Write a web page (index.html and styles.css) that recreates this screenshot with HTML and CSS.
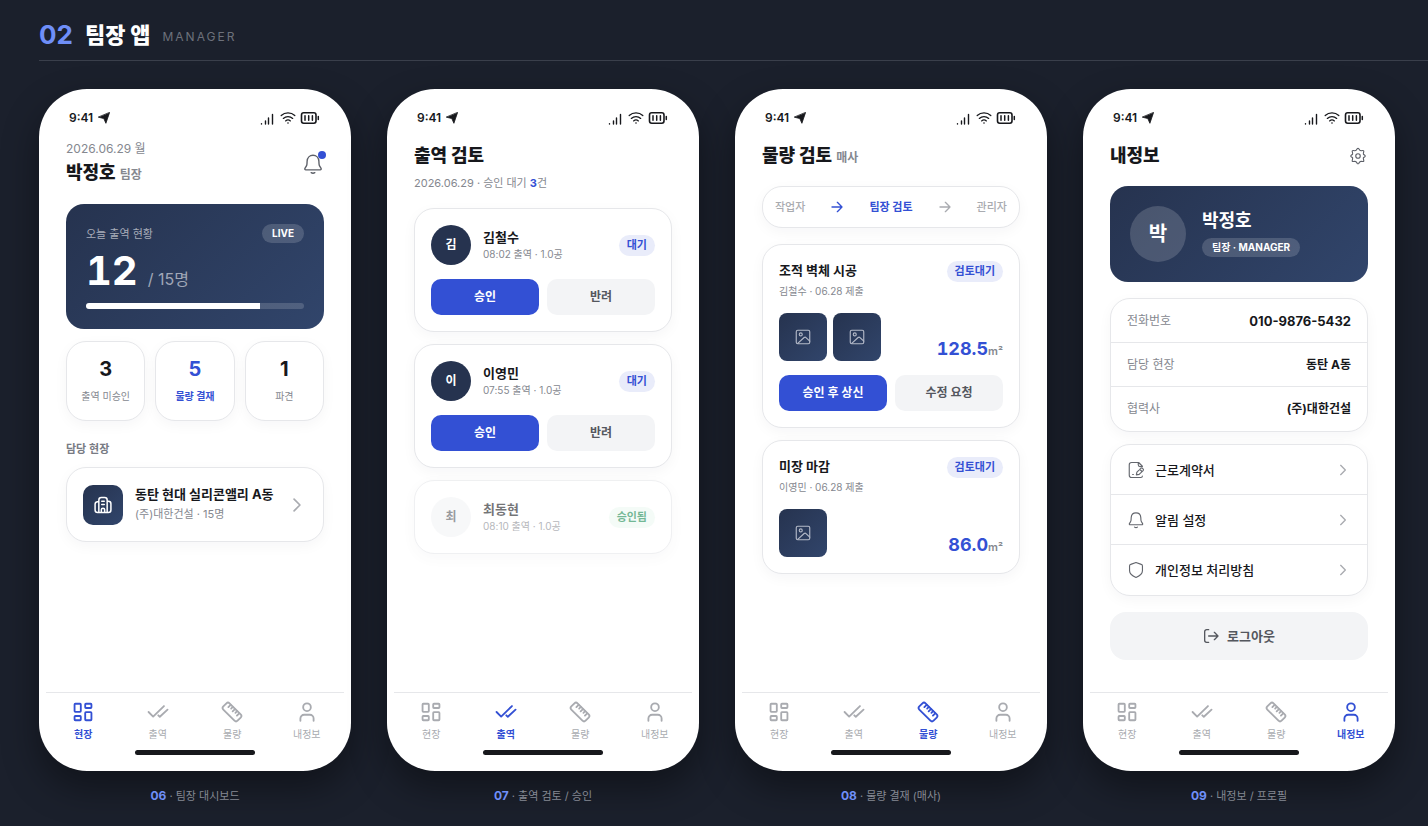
FILE: index.html
```html
<!DOCTYPE html>
<html lang="ko">
<head>
  <meta charset="UTF-8">
  <meta name="viewport" content="width=device-width, initial-scale=1">
  <title>팀장 앱</title>
  <link rel="stylesheet" href="styles.css">
</head>
<body>

  <!-- icon set -->
  <svg class="sprite" aria-hidden="true">
    <symbol id="i-location" viewBox="0 0 12 12"><path d="M11.5.7 7.900 11.300 5.800 6.600.6 5.200z" fill="currentColor" stroke="currentColor" stroke-width=".8" stroke-linejoin="round"/></symbol>
    <symbol id="i-signal" viewBox="0 0 14 14"><path d="M1.500 12.700V13M5.500 10V13M8.500 7V13M12.500 3.500V13" stroke-width="1.400"/></symbol>
    <symbol id="i-wifi" viewBox="0 0 16 14"><path d="M1.200 4.600a10 10 0 0 1 13.600 0M3.300 7.400a7 7 0 0 1 9.400 0M5.600 9.900a3.800 3.800 0 0 1 4.800 0" stroke-width="1.300"/><circle cx="8" cy="12" r=".8" fill="currentColor" stroke="none"/></symbol>
    <symbol id="i-battery" viewBox="0 0 20 14"><rect x="1.500" y="1.800" width="14.500" height="10.400" rx="2.200" stroke-width="1.600"/><path d="M5 4.800v4.400M8.700 4.800v4.400M12.400 4.800v4.400M18.300 5.500v3" stroke-width="1.500"/></symbol>
    <symbol id="i-bell" viewBox="0 0 24 24"><path d="M12 2.500c-3.700 0-6.200 2.800-6.400 6.300l-.2 3.200c0 .8-.3 1.600-.7 2.300l-1.500 2.500c-.4.900 0 1.600 1 1.600h15.600c1 0 1.400-.7 1-1.600l-1.500-2.500c-.4-.7-.7-1.500-.7-2.300l-.2-3.200C18.200 5.300 15.700 2.500 12 2.500zM10 21.500c1.200.7 2.800.7 4 0"/></symbol>
    <symbol id="i-building" viewBox="0 0 24 24"><path d="M7 21V6a3 3 0 0 1 3-3h4a3 3 0 0 1 3 3v15M7 8H5.500a3 3 0 0 0-3 3v7a3 3 0 0 0 3 3h13a3 3 0 0 0 3-3v-7.500a3 3 0 0 0-3-3H17M10.500 7.500h3M10.500 11.500h3M10 21v-3a2 2 0 0 1 4 0v3" stroke-width="1.800"/></symbol>
    <symbol id="i-chevron" viewBox="0 0 24 24"><path d="m8.500 5 7 7-7 7" stroke-width="2"/></symbol>
    <symbol id="i-arrow" viewBox="0 0 24 24"><path d="M4.500 12h15M12.500 5l7 7-7 7"/></symbol>
    <symbol id="i-image" viewBox="0 0 24 24"><rect x="3" y="3" width="18" height="18" rx="2"/><circle cx="9" cy="8.500" r="2"/><path d="m5 20.500 8.500-7.800c.9-.8 1.700-.8 2.500 0L21 17.500"/></symbol>
    <symbol id="i-gear" viewBox="0 0 24 24"><path d="M9.600 4.200 11 2.300c.6-.7 1.400-.7 2 0l1.400 1.900c.4.5 1 .8 1.700.8l2.400-.3c.9-.1 1.400.5 1.200 1.300L19.200 8.300c-.2.700 0 1.300.4 1.800l1.500 1c.8.600.8 1.300 0 1.900l-1.500 1c-.5.500-.6 1.100-.4 1.800l.5 2.300c.2.900-.3 1.400-1.200 1.300l-2.400-.3c-.7 0-1.300.2-1.700.8L13 21.800c-.6.700-1.400.7-2 0l-1.400-1.900c-.4-.6-1-.8-1.700-.8l-2.400.3c-.9.100-1.400-.4-1.200-1.300l.5-2.300c.2-.7.100-1.300-.4-1.800l-1.500-1c-.8-.6-.8-1.300 0-1.900l1.500-1c.4-.5.600-1.100.4-1.800L4.300 6c-.2-.8.300-1.400 1.200-1.300l2.400.3c.7 0 1.300-.3 1.700-.8z"/><circle cx="12" cy="12" r="3"/></symbol>
    <symbol id="i-file" viewBox="0 0 24 24"><path d="M20.500 7.500V7L15.500 2H6a3 3 0 0 0-3 3v14a3 3 0 0 0 3 3h12.500c1.200 0 2-.8 2-2M15 2.500V5a2.500 2.500 0 0 0 2.500 2.500h3M7.500 18h1M12.500 18.500l.7-3.700 5.300-5c1.700-1.400 4.500 1.400 3 3l-5.300 5zM17 11l3 3"/></symbol>
    <symbol id="i-shield" viewBox="0 0 24 24"><path d="m12 2 7 2.500c1 .3 1.600 1 1.600 2V13c0 4-3.700 6.900-8.600 9-4.900-2.100-8.600-5-8.600-9V6.500c0-1 .6-1.700 1.600-2z"/></symbol>
    <symbol id="i-logout" viewBox="0 0 24 24"><path d="M8.500 2.500H5.500a3 3 0 0 0-3 3v13a3 3 0 0 0 3 3h3M8.500 12H22M17 6.500l5.500 5.500-5.500 5.500"/></symbol>
    <symbol id="i-grid" viewBox="0 0 24 24"><rect x="2.800" y="3" width="6.800" height="8.800" rx=".8"/><rect x="14.400" y="3" width="6.800" height="4.600" rx=".8"/><rect x="2.800" y="16.400" width="6.800" height="4.600" rx=".8"/><rect x="14.400" y="12.200" width="6.800" height="8.800" rx=".8"/></symbol>
    <symbol id="i-checks" viewBox="0 0 24 24"><path d="m1.700 12 5 5L18.500 5.500M12.300 15.600l1.700 1.600 8.400-7.800"/></symbol>
    <symbol id="i-ruler" viewBox="0 0 24 24"><g transform="translate(12 12) rotate(45)"><rect x="-11" y="-4.800" width="22" height="9.600" rx="2.400"/><path d="M-6.600-4.500v3.500M-3.300-4.500v2.500M0-4.500v3.500M3.300-4.500v2.500M6.600-4.500v3.500"/></g></symbol>
    <symbol id="i-user" viewBox="0 0 24 24"><circle cx="12" cy="6.800" r="4.200"/><path d="M4.800 21.500V19a4 4 0 0 1 4-4h6.400a4 4 0 0 1 4 4v2.500"/></symbol>
  </svg>

  <header class="section-header">
    <span class="section-no">02</span>
    <h1>팀장 앱</h1>
    <span class="section-en">MANAGER</span>
  </header>

  <main class="phones">

    <!-- 06 dashboard -->
    <figure class="frame">
      <div class="phone">
        <div class="status">
          <span class="time">9:41</span><svg class="icon location"><use href="#i-location"/></svg>
          <svg class="icon signal"><use href="#i-signal"/></svg><svg class="icon wifi"><use href="#i-wifi"/></svg><svg class="icon battery"><use href="#i-battery"/></svg>
        </div>
        <div class="content">
          <div class="greeting">
            <div>
              <p class="date">2026.06.29 월</p>
              <h2>박정호 <small>팀장</small></h2>
            </div>
            <button class="icon-btn" aria-label="알림"><svg class="icon"><use href="#i-bell"/></svg><span class="dot"></span></button>
          </div>

          <section class="hero">
            <div class="hero-top"><span>오늘 출역 현황</span><span class="tag">LIVE</span></div>
            <p class="hero-num"><strong>12</strong> <span>/ 15명</span></p>
            <div class="bar"><div class="bar-fill" style="width: 80%"></div></div>
          </section>

          <div class="stats">
            <div class="card stat"><strong>3</strong><span>출역 미승인</span></div>
            <div class="card stat active"><strong>5</strong><span>물량 결재</span></div>
            <div class="card stat"><strong>1</strong><span>파견</span></div>
          </div>

          <h3 class="label">담당 현장</h3>
          <a class="card site" href="#">
            <span class="site-icon"><svg class="icon"><use href="#i-building"/></svg></span>
            <span class="site-text"><strong>동탄 현대 실리콘앨리 A동</strong><span>(주)대한건설 · 15명</span></span>
            <svg class="icon chevron"><use href="#i-chevron"/></svg>
          </a>
        </div>
        <nav class="tabs">
          <a class="active" href="#"><svg class="icon"><use href="#i-grid"/></svg>현장</a>
          <a href="#"><svg class="icon"><use href="#i-checks"/></svg>출역</a>
          <a href="#"><svg class="icon"><use href="#i-ruler"/></svg>물량</a>
          <a href="#"><svg class="icon"><use href="#i-user"/></svg>내정보</a>
        </nav>
        <div class="home-bar"></div>
      </div>
      <figcaption><b>06</b> · 팀장 대시보드</figcaption>
    </figure>

    <!-- 07 attendance -->
    <figure class="frame">
      <div class="phone">
        <div class="status">
          <span class="time">9:41</span><svg class="icon location"><use href="#i-location"/></svg>
          <svg class="icon signal"><use href="#i-signal"/></svg><svg class="icon wifi"><use href="#i-wifi"/></svg><svg class="icon battery"><use href="#i-battery"/></svg>
        </div>
        <div class="content">
          <div class="title"><h2>출역 검토</h2></div>
          <p class="subtitle">2026.06.29 · 승인 대기 <b>3</b>건</p>

          <div class="list">
            <article class="card">
              <div class="person">
                <span class="avatar">김</span>
                <div class="person-text"><strong>김철수</strong><span>08:02 출역 · 1.0공</span></div>
                <span class="badge">대기</span>
              </div>
              <div class="actions"><button class="btn primary">승인</button><button class="btn">반려</button></div>
            </article>
            <article class="card">
              <div class="person">
                <span class="avatar">이</span>
                <div class="person-text"><strong>이영민</strong><span>07:55 출역 · 1.0공</span></div>
                <span class="badge">대기</span>
              </div>
              <div class="actions"><button class="btn primary">승인</button><button class="btn">반려</button></div>
            </article>
            <article class="card done">
              <div class="person">
                <span class="avatar">최</span>
                <div class="person-text"><strong>최동현</strong><span>08:10 출역 · 1.0공</span></div>
                <span class="badge green">승인됨</span>
              </div>
            </article>
          </div>
        </div>
        <nav class="tabs">
          <a href="#"><svg class="icon"><use href="#i-grid"/></svg>현장</a>
          <a class="active" href="#"><svg class="icon"><use href="#i-checks"/></svg>출역</a>
          <a href="#"><svg class="icon"><use href="#i-ruler"/></svg>물량</a>
          <a href="#"><svg class="icon"><use href="#i-user"/></svg>내정보</a>
        </nav>
        <div class="home-bar"></div>
      </div>
      <figcaption><b>07</b> · 출역 검토 / 승인</figcaption>
    </figure>

    <!-- 08 quantity -->
    <figure class="frame">
      <div class="phone">
        <div class="status">
          <span class="time">9:41</span><svg class="icon location"><use href="#i-location"/></svg>
          <svg class="icon signal"><use href="#i-signal"/></svg><svg class="icon wifi"><use href="#i-wifi"/></svg><svg class="icon battery"><use href="#i-battery"/></svg>
        </div>
        <div class="content">
          <div class="title"><h2>물량 검토 <small>매사</small></h2></div>

          <div class="card steps">
            <span>작업자</span>
            <svg class="icon active"><use href="#i-arrow"/></svg>
            <span class="active">팀장 검토</span>
            <svg class="icon"><use href="#i-arrow"/></svg>
            <span>관리자</span>
          </div>

          <div class="list">
            <article class="card">
              <div class="work">
                <div class="work-text"><strong>조적 벽체 시공</strong><span>김철수 · 06.28 제출</span></div>
                <span class="badge">검토대기</span>
              </div>
              <div class="photos">
                <span class="thumb"><svg class="icon"><use href="#i-image"/></svg></span>
                <span class="thumb"><svg class="icon"><use href="#i-image"/></svg></span>
                <p class="amount">128.5<small>m²</small></p>
              </div>
              <div class="actions"><button class="btn primary">승인 후 상신</button><button class="btn">수정 요청</button></div>
            </article>
            <article class="card">
              <div class="work">
                <div class="work-text"><strong>미장 마감</strong><span>이영민 · 06.28 제출</span></div>
                <span class="badge">검토대기</span>
              </div>
              <div class="photos">
                <span class="thumb"><svg class="icon"><use href="#i-image"/></svg></span>
                <p class="amount">86.0<small>m²</small></p>
              </div>
            </article>
          </div>
        </div>
        <nav class="tabs">
          <a href="#"><svg class="icon"><use href="#i-grid"/></svg>현장</a>
          <a href="#"><svg class="icon"><use href="#i-checks"/></svg>출역</a>
          <a class="active" href="#"><svg class="icon"><use href="#i-ruler"/></svg>물량</a>
          <a href="#"><svg class="icon"><use href="#i-user"/></svg>내정보</a>
        </nav>
        <div class="home-bar"></div>
      </div>
      <figcaption><b>08</b> · 물량 결재 (매사)</figcaption>
    </figure>

    <!-- 09 profile -->
    <figure class="frame">
      <div class="phone">
        <div class="status">
          <span class="time">9:41</span><svg class="icon location"><use href="#i-location"/></svg>
          <svg class="icon signal"><use href="#i-signal"/></svg><svg class="icon wifi"><use href="#i-wifi"/></svg><svg class="icon battery"><use href="#i-battery"/></svg>
        </div>
        <div class="content">
          <div class="title">
            <h2>내정보</h2>
            <button class="icon-btn small" aria-label="설정"><svg class="icon"><use href="#i-gear"/></svg></button>
          </div>

          <section class="hero profile">
            <span class="avatar large">박</span>
            <div class="profile-text">
              <strong>박정호</strong>
              <span class="tag">팀장 · MANAGER</span>
            </div>
          </section>

          <dl class="card rows info">
            <div><dt>전화번호</dt><dd class="phone-no">010-9876-5432</dd></div>
            <div><dt>담당 현장</dt><dd>동탄 A동</dd></div>
            <div><dt>협력사</dt><dd>(주)대한건설</dd></div>
          </dl>

          <div class="card rows menu">
            <a href="#"><svg class="icon"><use href="#i-file"/></svg><span>근로계약서</span><svg class="icon chevron"><use href="#i-chevron"/></svg></a>
            <a href="#"><svg class="icon"><use href="#i-bell"/></svg><span>알림 설정</span><svg class="icon chevron"><use href="#i-chevron"/></svg></a>
            <a href="#"><svg class="icon"><use href="#i-shield"/></svg><span>개인정보 처리방침</span><svg class="icon chevron"><use href="#i-chevron"/></svg></a>
          </div>

          <button class="btn logout"><svg class="icon"><use href="#i-logout"/></svg>로그아웃</button>
        </div>
        <nav class="tabs">
          <a href="#"><svg class="icon"><use href="#i-grid"/></svg>현장</a>
          <a href="#"><svg class="icon"><use href="#i-checks"/></svg>출역</a>
          <a href="#"><svg class="icon"><use href="#i-ruler"/></svg>물량</a>
          <a class="active" href="#"><svg class="icon"><use href="#i-user"/></svg>내정보</a>
        </nav>
        <div class="home-bar"></div>
      </div>
      <figcaption><b>09</b> · 내정보 / 프로필</figcaption>
    </figure>

  </main>

</body>
</html>
```

FILE: styles.css
```css
:root {
  --accent: #3350d4;
  --ink: #17181c;
  --gray: #85888f;
  --light: #a9abb0;
  --line: #e6e7ea;
  --soft: #f3f4f6;
  --navy: linear-gradient(135deg, #26334f, #31456b);
}

* {
  box-sizing: border-box;
  margin: 0;
  padding: 0;
}

body {
  font-family: Inter, "Noto Sans CJK KR", sans-serif;
  font-size: 12px;
  line-height: 18px;
  color: var(--ink);
  background: #1b202c;
  padding: 20px 0 20px 39px;
}

a {
  color: inherit;
  text-decoration: none;
}

button {
  font: inherit;
  color: inherit;
  border: none;
  background: none;
  cursor: pointer;
}

.sprite {
  display: none;
}

.icon {
  width: 20px;
  height: 20px;
  flex: none;
  fill: none;
  stroke: currentColor;
  stroke-width: 1.5;
  stroke-linecap: round;
  stroke-linejoin: round;
}

/* section header */
.section-header {
  display: flex;
  align-items: flex-start;
  gap: 12px;
  height: 41px;
  line-height: 30px;
  border-bottom: 1px solid #3a3f4b;
  margin-bottom: 28px;
}

.section-no {
  font-size: 26px;
  font-weight: 700;
  color: #6f8ff8;
}

h1 {
  font-size: 22px;
  font-weight: 800;
  color: #fff;
}

.section-en {
  font-size: 12px;
  line-height: 34px;
  letter-spacing: 2px;
  color: #6d717b;
}

/* phones */
.phones {
  display: grid;
  grid-template-columns: repeat(auto-fit, minmax(280px, 1fr));
  gap: 36px;
  padding-right: 33px;
}

.phone {
  display: flex;
  flex-direction: column;
  min-height: 682px;
  padding: 7px;
  border-radius: 48px;
  background: #fff;
  box-shadow: 0 16px 36px rgba(0, 0, 0, 0.4);
}

figcaption {
  margin-top: 16px;
  text-align: center;
  font-size: 11px;
  color: #858993;
}

figcaption b {
  font-size: 12px;
  line-height: 12px;
  color: #6f8ff8;
}

.status {
  display: flex;
  align-items: center;
  height: 44px;
  padding: 0 24px 0 23px;
}

.time {
  font-weight: 600;
}

.status .location {
  width: 12px;
  height: 12px;
  margin-left: 5px;
}

.status .signal {
  width: 14px;
  height: 14px;
  margin-left: auto;
}

.status .wifi {
  width: 16px;
  height: 14px;
  margin: 0 4px 0 6px;
}

.status .battery {
  width: 20px;
  height: 14px;
}

.content {
  flex: 1;
  padding: 0 20px;
}

h2 {
  font-size: 18px;
  font-weight: 800;
  line-height: 30px;
}

h2 small {
  font-size: 12px;
  font-weight: 600;
  line-height: 12px;
  color: var(--gray);
}

.greeting,
.title {
  display: flex;
  align-items: center;
  justify-content: space-between;
}

.greeting {
  margin-bottom: 16px;
}

.title {
  height: 31px;
}

.date {
  color: var(--gray);
}

.icon-btn {
  position: relative;
  display: flex;
  color: #5d6068;
}

.icon-btn .icon {
  width: 22px;
  height: 22px;
}

.icon-btn.small {
  padding: 1px;
}

.icon-btn.small .icon {
  width: 18px;
  height: 18px;
}

.dot {
  position: absolute;
  top: -2px;
  right: -2px;
  width: 8px;
  height: 8px;
  border-radius: 50%;
  background: var(--accent);
}

.subtitle {
  margin: 3px 0 16px;
  font-size: 11px;
  color: var(--gray);
}

.subtitle b {
  color: var(--accent);
}

/* cards */
.card {
  padding: 16px;
  border: 1px solid var(--line);
  border-radius: 20px;
  background: #fff;
  box-shadow: 0 4px 14px rgba(20, 25, 40, 0.04);
}

.list {
  display: grid;
  gap: 12px;
}

.hero {
  padding: 20px;
  border-radius: 18px;
  color: #fff;
  background: var(--navy);
}

.hero-top {
  display: flex;
  align-items: center;
  justify-content: space-between;
  height: 19px;
  color: #a8adb9;
  font-size: 11px;
}

.tag {
  padding: 0 10px;
  border-radius: 10px;
  background: rgba(255, 255, 255, 0.16);
  color: #fff;
  font-size: 10px;
  font-weight: 700;
  line-height: 19px;
}

.hero-num {
  display: flex;
  align-items: baseline;
  gap: 10px;
  margin: 8px 0 12px;
  line-height: 40px;
}

.hero-num strong {
  font-size: 40px;
  font-weight: 700;
  font-variant-numeric: tabular-nums;
}

.hero-num span {
  font-size: 16px;
  line-height: 20px;
  color: #a0a7b7;
}

.bar {
  height: 6px;
  border-radius: 3px;
  overflow: hidden;
  background: rgba(255, 255, 255, 0.16);
}

.bar-fill {
  height: 100%;
  background: #fff;
}

.stats {
  display: grid;
  grid-template-columns: repeat(3, 1fr);
  gap: 10px;
  margin: 12px 0 20px;
}

.stat {
  display: grid;
  gap: 8px;
  padding: 16px 4px;
  text-align: center;
}

.stat strong {
  font-size: 20px;
  line-height: 22px;
}

.stat span {
  font-size: 10px;
  line-height: 16px;
  color: var(--gray);
}

.stat.active strong,
.stat.active span {
  color: var(--accent);
  font-weight: 700;
}

.label {
  margin-bottom: 10px;
  font-size: 11px;
  font-weight: 600;
  line-height: 16px;
  color: #787b84;
}

.site {
  display: flex;
  align-items: center;
  gap: 12px;
}

.site-icon {
  display: grid;
  place-items: center;
  width: 40px;
  height: 40px;
  border-radius: 10px;
  color: #fff;
  background: var(--navy);
}

.site-text,
.person-text,
.work-text {
  display: grid;
  flex: 1;
}

.site-text strong {
  font-size: 13px;
  line-height: 20px;
}

.site-text span {
  font-size: 11px;
  color: var(--gray);
  line-height: 21px;
}

.chevron {
  color: var(--light);
}

/* attendance */
.person {
  display: flex;
  align-items: center;
  gap: 12px;
}

.avatar {
  display: grid;
  place-items: center;
  width: 40px;
  height: 40px;
  border-radius: 50%;
  font-size: 12px;
  font-weight: 700;
  color: #fff;
  background: #26334f;
}

.person-text strong,
.work-text strong {
  font-size: 13px;
  line-height: 18px;
}

.person-text span,
.work-text span {
  font-size: 10px;
  line-height: 16px;
  color: var(--gray);
}

.badge {
  padding: 0 8px;
  border-radius: 11px;
  font-size: 11px;
  font-weight: 700;
  line-height: 21px;
  color: var(--accent);
  background: #e9ecfa;
}

.badge.green {
  color: #16894f;
  background: #edfaf3;
}

.done {
  opacity: 0.6;
}

.done .avatar {
  color: #55585f;
  background: var(--soft);
}

.actions {
  display: grid;
  grid-template-columns: 1fr 1fr;
  gap: 8px;
  margin-top: 14px;
}

.btn {
  height: 36px;
  border-radius: 10px;
  font-weight: 700;
  color: #54575e;
  background: var(--soft);
}

.btn.primary {
  color: #fff;
  background: var(--accent);
}

/* quantity */
.steps {
  display: flex;
  align-items: center;
  justify-content: space-between;
  height: 42px;
  margin: 15px 0 16px;
  padding: 0 12px;
  font-size: 11px;
  font-weight: 500;
  color: var(--light);
}

.steps .icon {
  width: 16px;
  height: 16px;
  stroke-width: 2;
}

.steps .active {
  font-weight: 700;
  color: var(--accent);
}

.work {
  display: flex;
  align-items: flex-start;
  margin-bottom: 14px;
}

.work-text {
  gap: 4px;
}

.photos {
  display: flex;
  align-items: flex-end;
  gap: 6px;
}

.thumb {
  display: grid;
  place-items: center;
  width: 48px;
  height: 48px;
  border-radius: 8px;
  color: #b4bac8;
  background: var(--navy);
}

.thumb .icon {
  width: 18px;
  height: 18px;
}

.amount {
  margin-left: auto;
  font-size: 18px;
  font-weight: 700;
  font-variant-numeric: tabular-nums;
  line-height: 24px;
  color: var(--accent);
}

.amount small {
  font-size: 11px;
  font-weight: 600;
  line-height: 11px;
  color: var(--gray);
}

/* profile */
.profile {
  display: flex;
  align-items: center;
  gap: 16px;
  margin: 15px 0 16px;
}

.avatar.large {
  width: 56px;
  height: 56px;
  font-size: 20px;
  background: rgba(255, 255, 255, 0.16);
}

.profile-text {
  display: grid;
  justify-items: start;
  gap: 7px;
}

.profile-text strong {
  font-size: 18px;
  line-height: 20px;
}

.rows {
  margin-bottom: 12px;
  padding: 0;
}

.rows > * {
  display: flex;
  align-items: center;
  min-height: 44px;
  padding: 0 16px;
  border-bottom: 1px solid var(--line);
}

.rows > :last-child {
  border-bottom: none;
}

.info > * {
  justify-content: space-between;
}

.info dt {
  color: var(--gray);
}

.info dd {
  font-weight: 700;
}

.info .phone-no {
  font-size: 13px;
}

.menu {
  margin-bottom: 16px;
}

.menu > * {
  min-height: 50px;
  gap: 10px;
  font-size: 13px;
  font-weight: 500;
}

.menu span {
  flex: 1;
}

.menu .icon {
  width: 18px;
  height: 18px;
  color: #63666d;
}

.menu .chevron {
  width: 16px;
  height: 16px;
  color: var(--light);
}

.logout {
  display: flex;
  align-items: center;
  justify-content: center;
  gap: 8px;
  width: 100%;
  height: 48px;
  border-radius: 16px;
  font-size: 13px;
}

.logout .icon {
  width: 16px;
  height: 16px;
  stroke-width: 2;
}

/* bottom tabs */
.tabs {
  display: grid;
  grid-template-columns: repeat(4, 1fr);
  padding: 8px 0 9px;
  border-top: 1px solid var(--line);
}

.tabs a {
  display: grid;
  justify-items: center;
  gap: 4px;
  font-size: 10px;
  line-height: 14px;
  color: var(--light);
}

.tabs .icon {
  width: 22px;
  height: 22px;
  stroke-width: 2;
}

.tabs .active {
  font-weight: 700;
  color: var(--accent);
}

.home-bar {
  width: 120px;
  height: 5px;
  margin: 0 auto 9px;
  border-radius: 3px;
  background: var(--ink);
}
```
